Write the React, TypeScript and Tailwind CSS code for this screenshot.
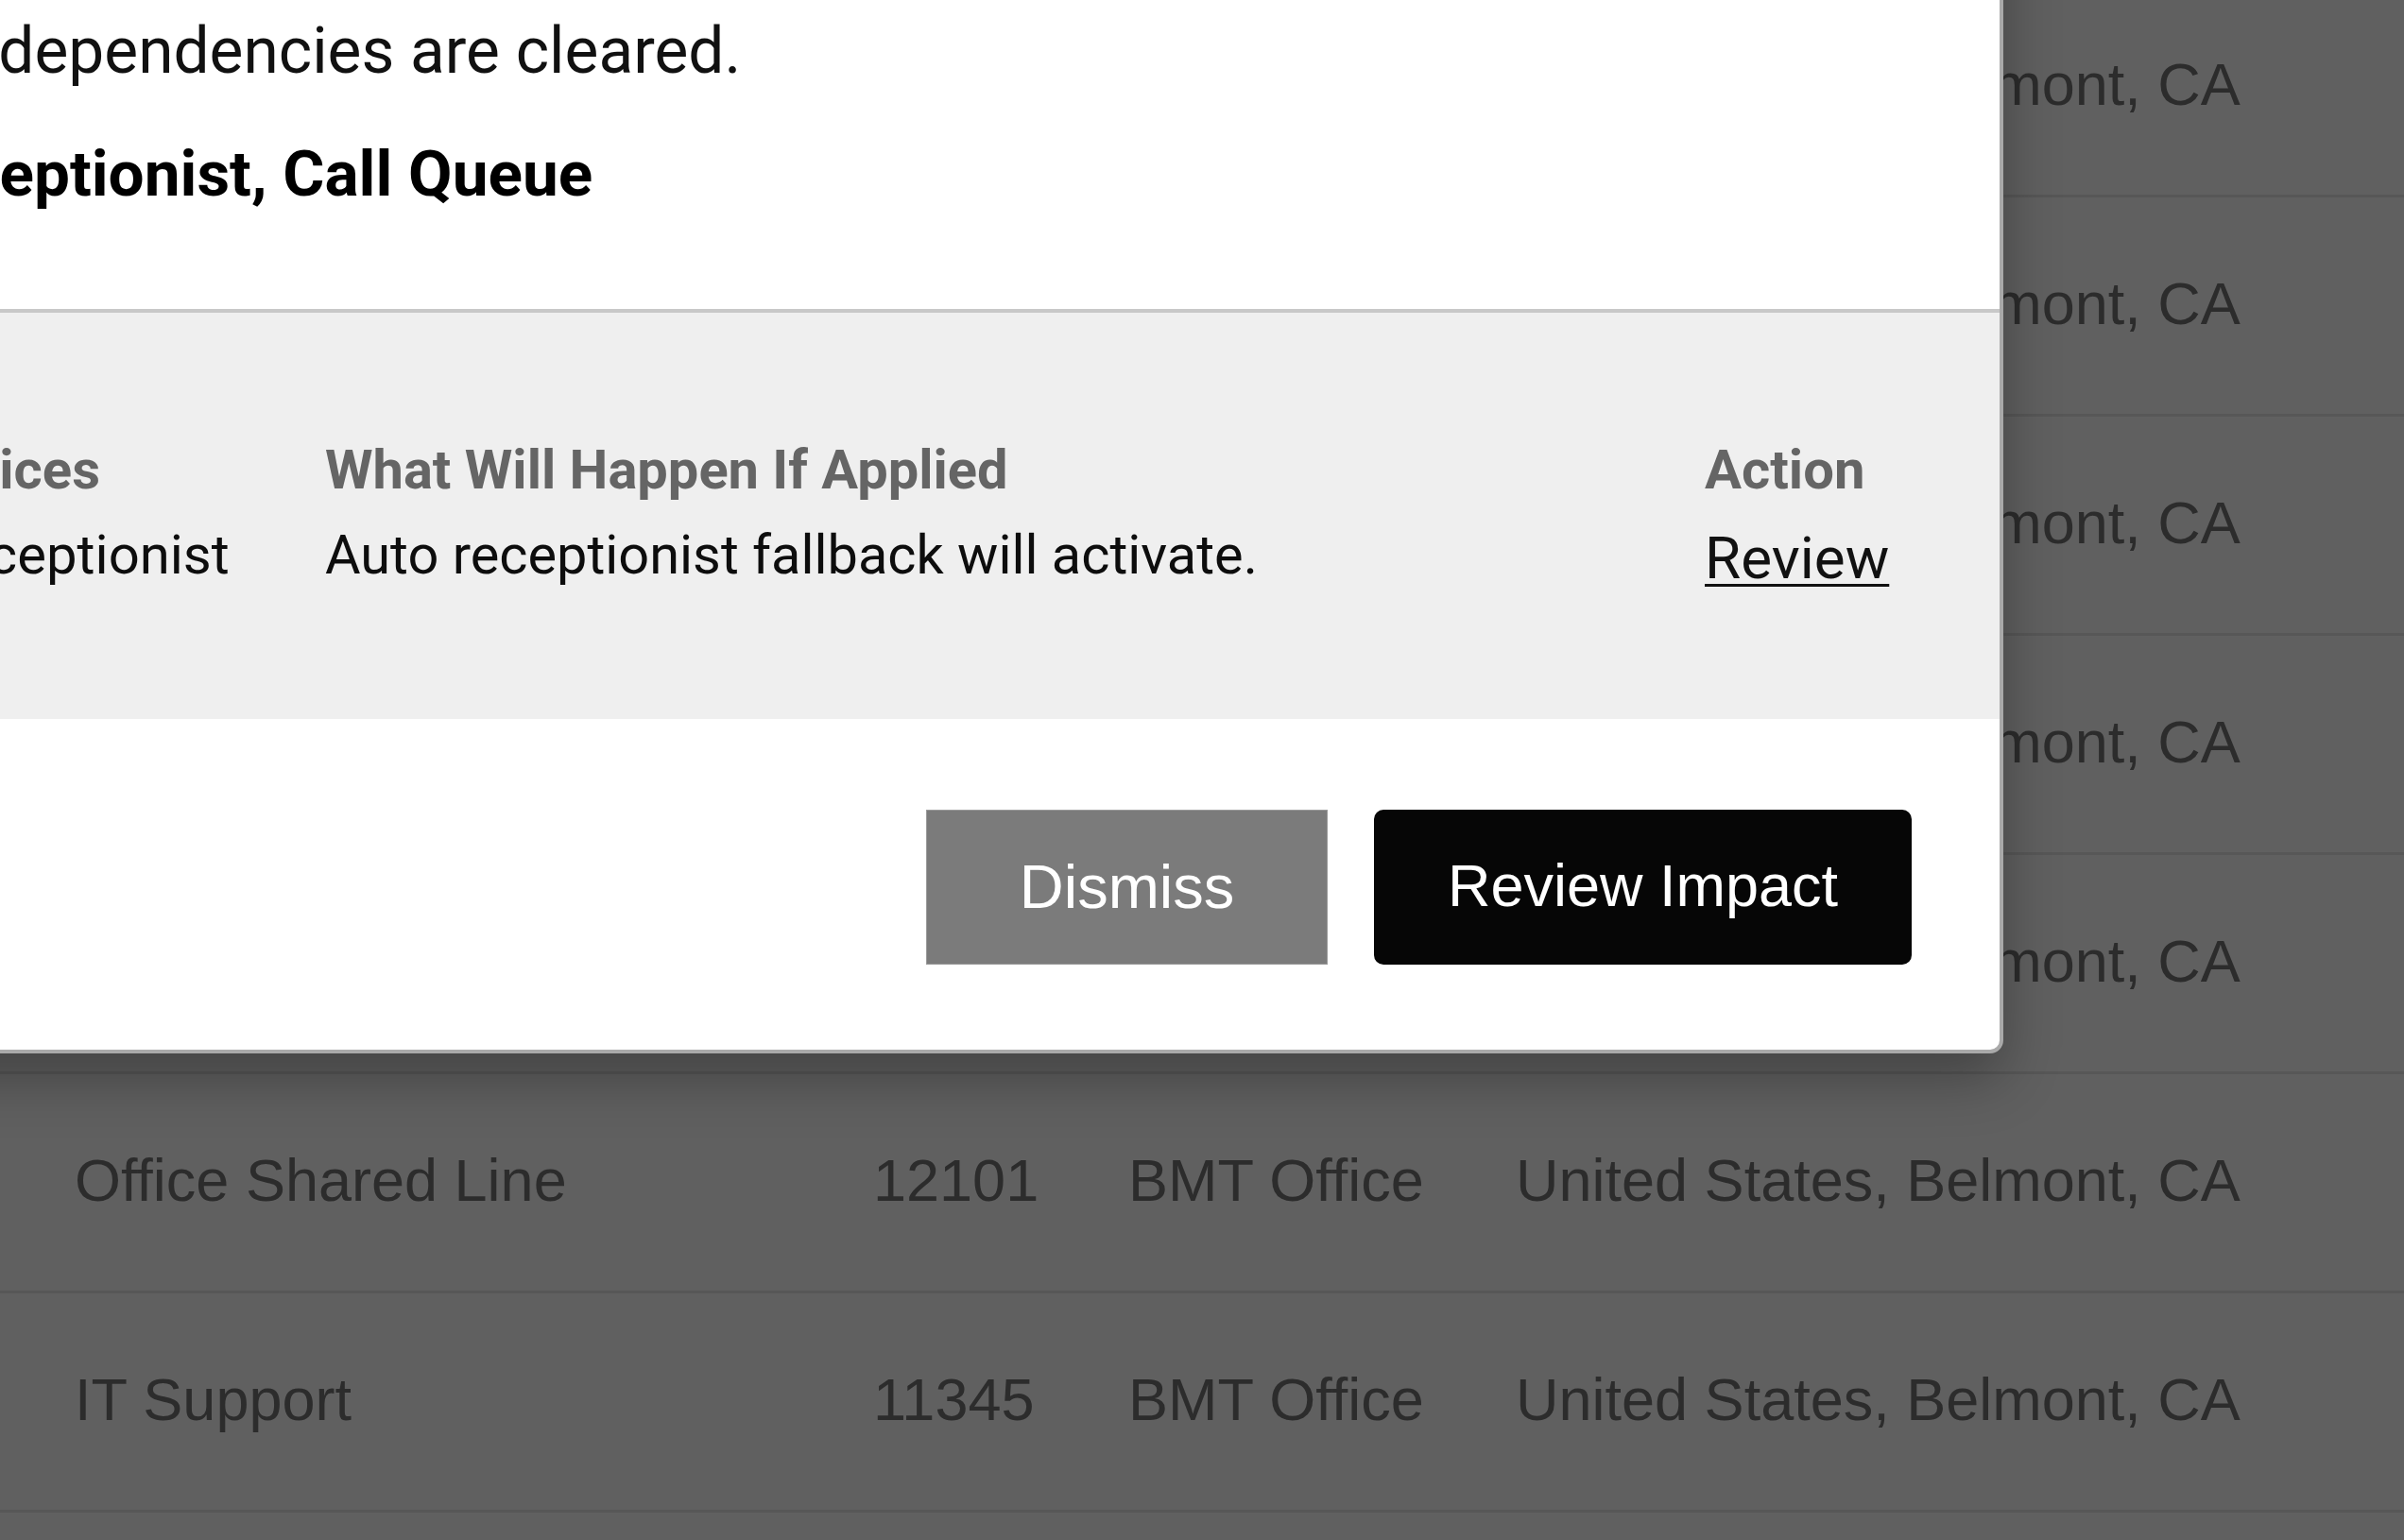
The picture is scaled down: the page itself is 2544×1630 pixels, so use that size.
import React from "react";

type BgRow = { name: string; ext: string; site: string; address: string };

const rows: BgRow[] = [
    { name: "Main Company Number", ext: "10001", site: "BMT Office", address: "United States, Belmont, CA" },
    { name: "Front Desk", ext: "10102", site: "BMT Office", address: "United States, Belmont, CA" },
    { name: "Sales Line", ext: "10230", site: "BMT Office", address: "United States, Belmont, CA" },
    { name: "Support Hotline", ext: "10455", site: "BMT Office", address: "United States, Belmont, CA" },
    { name: "Conference Room", ext: "11020", site: "BMT Office", address: "United States, Belmont, CA" },
    { name: "Office Shared Line", ext: "12101", site: "BMT Office", address: "United States, Belmont, CA" },
    { name: "IT Support", ext: "11345", site: "BMT Office", address: "United States, Belmont, CA" },
    { name: "Warehouse", ext: "12877", site: "BMT Office", address: "United States, Belmont, CA" },
];

function BackgroundTable() {
    return (
        <div className="-mt-[23px] font-['Liberation_Sans',Arial,sans-serif] text-[63px] leading-[70px] text-[#2c2c2c]">
            {rows.map((r) => (
                <div
                    key={r.ext}
                    className="grid h-[232px] grid-cols-[845px_270px_410px_1fr] items-center border-b-[3px] border-[#575757] pb-[5px] pl-[79px] whitespace-nowrap"
                >
                    <span>{r.name}</span>
                    <span>{r.ext}</span>
                    <span>{r.site}</span>
                    <span>{r.address}</span>
                </div>
            ))}
        </div>
    );
}

function DeleteBlockedModal() {
    return (
        <div className="absolute -left-[700px] -top-[334px] w-[2820px] overflow-hidden rounded-[14px] border-4 border-[#a9a9a9] bg-white font-[Roboto,sans-serif] shadow-[0_26px_60px_rgba(0,0,0,0.3)]">
            {/* intro */}
            <div className="border-b-4 border-[#c8c8c8] pt-[90px] pb-[95px] pl-[430px] text-[#111]">
                <h2 className="mb-[40px] text-[80px] leading-[110px] font-bold">Unable to Delete Number</h2>
                <p className="text-[67.6px] leading-[96px] whitespace-nowrap">
                    <span className="block">This number is assigned to other services and can only be deleted</span>
                    <span className="block">when all dependencies are cleared.</span>
                </p>
                <p className="mt-[34px] -ml-[9px] text-[67.5px] leading-[96px] font-bold text-black whitespace-nowrap">
                    Auto Receptionist, Call Queue
                </p>
            </div>

            {/* impact table */}
            <div className="grid grid-cols-[558px_1460px_1fr] bg-[#efefef] pt-[126px] pb-[130px] pl-[482px] whitespace-nowrap">
                <span className="ml-[11px] text-[58px] leading-[80px] font-bold text-[#656565]">All Services</span>
                <span className="text-[57.8px] leading-[80px] font-bold text-[#656565]">What Will Happen If Applied</span>
                <span className="text-[58px] leading-[80px] font-bold text-[#656565]">Action</span>
                <span className="mt-[10px] text-[58px] leading-[80px] text-[#0d0d0d]">Auto Receptionist</span>
                <span className="mt-[10px] text-[57.7px] leading-[80px] text-[#0d0d0d]">Auto receptionist fallback will activate.</span>
                <span className="mt-[14px]">
                    <button
                        type="button"
                        className="text-[62px] leading-[80px] text-[#111] underline decoration-[3px] underline-offset-[6px]"
                    >
                        Review
                    </button>
                </span>
            </div>

            {/* footer */}
            <div className="flex justify-end gap-[49px] pt-[96px] pr-[93px] pb-[90px] font-['Liberation_Sans',Arial,sans-serif]">
                <button
                    type="button"
                    className="flex h-[164px] w-[425px] items-center justify-center border border-[#9a9a9a] bg-[#7b7b7b] text-[65px] text-white"
                >
                    Dismiss
                </button>
                <button
                    type="button"
                    className="flex h-[164px] w-[569px] items-center justify-center rounded-[10px] bg-[#060606] pb-[4px] text-[63px] text-white"
                >
                    Review Impact
                </button>
            </div>
        </div>
    );
}

export default function App() {
    return (
        <div className="relative h-[1630px] w-[2544px] overflow-hidden bg-[#606060]">
            <BackgroundTable />
            <DeleteBlockedModal />
        </div>
    );
}
